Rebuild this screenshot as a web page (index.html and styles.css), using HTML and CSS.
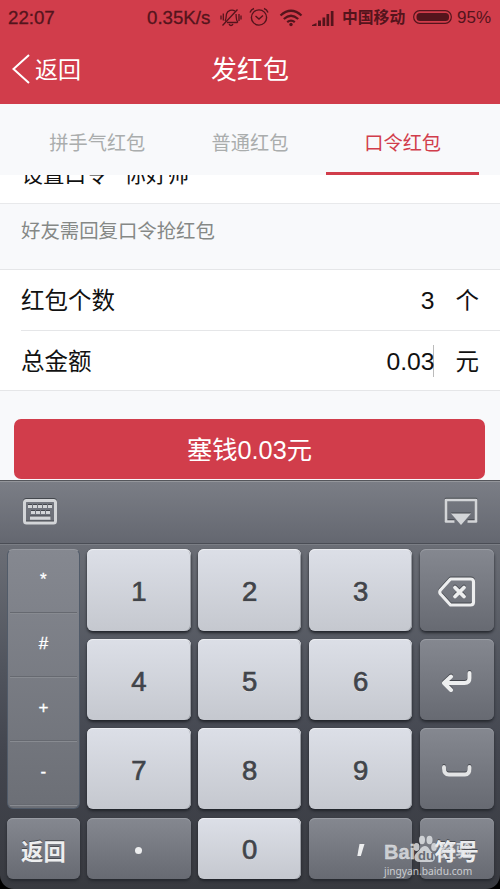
FILE: index.html
```html
<!DOCTYPE html>
<html lang="zh-CN">
<head>
<meta charset="utf-8">
<title>发红包</title>
<link rel="stylesheet" href="styles.css">
</head>
<body>
<div class="screen">
  <header class="top">
    <div class="status">
      <span class="clock">22:07</span>
      <span class="speed">0.35K/s</span>
      <svg class="i-mute" width="22" height="20" viewBox="0 0 22 20" fill="none" stroke="currentColor" stroke-width="1.3"><path d="M7 14.500h10.500M5 13c1.500-2 1-5 1.500-7C7.500 2.500 12 1 15 3M16 6c.5 3-.5 6 2 8.500M9 16c1 2 3 2 4 0M2.500 17.500L17.500 1.500M1 7.500v4M3.300 5.500v7M19 6v7M21 7.500v4"/></svg>
      <svg class="i-alarm" width="20" height="20" viewBox="0 0 20 20" fill="none" stroke="currentColor" stroke-width="1.4"><circle cx="10" cy="10.500" r="7.600"/><path d="M6.500 9l3.500 3 4-3.500M1 5.500q1-3 4-4M19 5.500q-1-3-4-4"/></svg>
      <svg class="i-wifi" width="24" height="18" viewBox="0 0 24 18" fill="none" stroke="currentColor" stroke-width="2.200"><path d="M1.500 6.500q10.500-9.500 21 0M4.800 10q7.200-6.500 14.400 0M8.200 13.200q3.800-3.200 7.600 0"/><circle cx="12" cy="15.500" r="1.700" fill="currentColor" stroke="none"/></svg>
      <svg class="i-signal" width="22" height="16" viewBox="0 0 22 16" fill="currentColor"><path d="M0 16v-1l4.500-2v3zM6 10.500h3V16H6zM10.500 7.500h2.700V16h-2.700zM14.500 4h2.700v12h-2.700zM18.800 1h2.700v15h-2.700z"/></svg>
      <span class="carrier">中国移动</span>
      <svg class="i-battery" width="39" height="14" viewBox="0 0 39 14"><rect x=".7" y=".7" width="37.600" height="12.600" rx="6" fill="none" stroke="currentColor" stroke-width="1.200"/><rect x="3.500" y="3" width="32.500" height="8" rx="3.500" fill="currentColor"/></svg>
      <span class="percent">95%</span>
    </div>
    <nav class="nav">
      <a class="back"><svg width="18" height="30" viewBox="0 0 18 30" fill="none" stroke="#fff" stroke-width="2"><path d="M17 1L1.500 15 17 29"/></svg><span>返回</span></a>
      <h1>发红包</h1>
    </nav>
  </header>
  <div class="tabs">
    <div class="tab">拼手气红包</div>
    <div class="tab">普通红包</div>
    <div class="tab active">口令红包</div>
  </div>
  <div class="command"><span>设置口令</span><span>你好帅</span></div>
  <div class="hint">好友需回复口令抢红包</div>
  <div class="form">
    <div class="row"><label>红包个数</label><span class="value">3</span><span class="unit">个</span></div>
    <div class="row"><label>总金额</label><span class="value caret">0.03</span><span class="unit">元</span></div>
  </div>
  <div class="submit">塞钱0.03元</div>
  <div class="keyboard-wrap">
    <div class="keyboard">
      <div class="toolbar">
        <svg class="emboss" width="34" height="28" viewBox="0 0 34 28"><rect x="1.500" y="2.500" width="31" height="22.500" rx="2" fill="none" stroke="#d3d5d8" stroke-width="3"/><path fill="#d3d5d8" d="M5 7h4v3H5zM10 7h4v3h-4zM15 7h4v3h-4zM20 7h4v3h-4zM25 7h4v3h-4zM8 13h4v3H8zM13 13h4v3h-4zM18 13h4v3h-4zM23 13h4v3h-4zM7 18.500h20.500v3.200H7z"/></svg>
        <svg class="emboss" width="34" height="28" viewBox="0 0 34 28"><path d="M10.500 23.500H2V2h30v21.500h-8.500" fill="none" stroke="#d3d5d8" stroke-width="2.700" stroke-linejoin="round"/><path d="M7 15.500h20L17 27z" fill="#d3d5d8"/></svg>
      </div>
      <div class="keys">
        <div class="symbols"><span>*</span><span>#</span><span>+</span><span>-</span></div>
        <div class="key">1</div><div class="key">2</div><div class="key">3</div>
        <div class="key dark"><svg class="emboss" width="38" height="30" viewBox="0 0 38 30" fill="none" stroke="#edeeef" stroke-width="3.200" stroke-linejoin="round" stroke-linecap="round"><path d="M12.500 2h20q3 0 3 3v20q0 3-3 3h-20L2.500 17q-1.500-2 0-4z"/><path d="M17 10.500l9 9M26 10.500l-9 9" stroke-width="3.800"/></svg></div>
        <div class="key">4</div><div class="key">5</div><div class="key">6</div>
        <div class="key dark"><svg class="emboss" width="32" height="24" viewBox="0 0 32 24" fill="none" stroke="#edeeef" stroke-width="4" stroke-linejoin="round" stroke-linecap="round"><path d="M28.500 3v5q0 5-5 5H3M10 6.500L3 13l7 7"/></svg></div>
        <div class="key">7</div><div class="key">8</div><div class="key">9</div>
        <div class="key dark"><svg class="emboss" width="32" height="14" viewBox="0 0 32 14" fill="none" stroke="#e3e4e5" stroke-width="3.900" stroke-linecap="round"><path d="M3 3v1.500Q3 10.500 8 10.500h16q4.500 0 4.500-6V3"/></svg></div>
        <div class="key dark word">返回</div>
        <div class="key dark"><i class="dot"></i></div>
        <div class="key">0</div>
        <div class="key dark"><svg width="9" height="14" viewBox="0 0 9 14"><path d="M3.500 1h5L4.800 13H1.300z" fill="#edeeef"/></svg></div>
        <div class="key dark word">符号</div>
      </div>
    </div>
    <div class="watermark">
      <div class="brand"><span>Bai</span><svg width="24" height="28" viewBox="0 0 24 28" fill="currentColor"><ellipse cx="3.500" cy="12" rx="3" ry="4"/><ellipse cx="9" cy="5" rx="3" ry="4.200"/><ellipse cx="16.500" cy="5" rx="3" ry="4.200"/><ellipse cx="21" cy="12" rx="2.800" ry="4"/><path d="M12 11c4 0 4 4 7.500 7 4.500 4 2 9-2 9H6.500c-5 0-7-5-3-9 3.500-3 4.500-7 8.500-7z"/><text x="5" y="24.500" class="du">du</text></svg><span class="cn">经验</span></div>
      <div class="url">jingyan.baidu.com</div>
    </div>
  </div>
</div>
</body>
</html>
```
FILE: styles.css
```css
* { box-sizing: border-box; }
body { margin: 0; background: #f8f9fb; font-family: "Liberation Sans", "Noto Sans CJK SC", sans-serif; color: #111; }
.screen { width: 500px; height: 889px; overflow: hidden; display: flex; flex-direction: column; }
.screen > * { flex-shrink: 0; }
svg { display: block; flex: none; }

.top { height: 104px; background: #d13d4b; color: #fff; }
.status { height: 36px; display: flex; align-items: center; padding-left: 8px; color: #54141c; white-space: nowrap; font-size: 18px; -webkit-text-stroke: .3px #54141c; }
.clock { width: 139px; font-size: 18.700px; }
.speed { width: 73px; font-size: 18.700px; }
.i-mute { margin-top: -1px; }
.i-alarm { margin-left: 7px; margin-top: -2px; }
.i-wifi { margin-left: 10px; margin-top: -1px; }
.i-signal { margin-left: 9px; margin-top: -1px; }
.carrier { margin-left: 8px; margin-top: -3px; width: 64px; font-size: 15.800px; font-weight: 700; -webkit-text-stroke: 0; }
.i-battery { margin-left: 7px; margin-top: -2px; }
.percent { margin-left: 5px; font-size: 17px; -webkit-text-stroke: 0; }
.nav { height: 68px; display: grid; grid-template-columns: 1fr auto 1fr; align-items: center; padding: 0 12px; }
.back { display: flex; align-items: center; gap: 5px; font-size: 23px; line-height: 34px; }
.back svg { margin-top: -2px; }
.nav h1 { margin: 0; font-size: 26px; font-weight: 400; line-height: 38px; }

.tabs { height: 71px; padding: 0 21px; display: grid; grid-template-columns: 1fr 1fr 1fr; background: #f8f9fb; font-size: 19.200px; line-height: 79px; text-align: center; color: #aaadad; }
.tab { height: 71px; white-space: nowrap; }
.active { color: #d13d4b; border-bottom: 3px solid #d13d4b; }
.command { height: 29px; padding-left: 21.500px; display: flex; align-items: flex-end; gap: 17px; background: #fff; border-bottom: 1px solid #e8e9eb; overflow: hidden; font-size: 21.500px; line-height: 56px; }
.command span { height: 56px; }
.hint { height: 65px; padding-left: 21px; font-size: 19.400px; line-height: 54px; color: #858886; }
.form { height: 122px; background: #fff; border: solid #e5e6e8; border-width: 1px 0; }
.row { height: 60px; margin-left: 21px; padding: 2px 21px 0 0; display: flex; align-items: center; font-size: 23.500px; line-height: 36px; }
.row + .row { height: 61px; border-top: 1px solid #e5e6e8; }
.value { margin-left: auto; font-size: 24.700px; }
.caret { height: 32px; margin-top: -3px; line-height: 34px; background: linear-gradient(#bbb, #bbb) right 1px top / 1px 32px no-repeat; }
.unit { margin-left: 21px; }
.submit { height: 60px; margin: 28px 15px 1px 14px; border-radius: 7px; background: #d13d4b; color: #fff; font-size: 25.300px; line-height: 62px; text-align: center; }

.keyboard-wrap { position: relative; height: 409px; background: #000; }
.keyboard { height: 409px; border-radius: 0 0 14px 14px; background: linear-gradient(#6b6e76 63px, #50545d 190px, #43464f 270px, #383a40); overflow: hidden; }
.toolbar { height: 64px; padding: 0 22px 1px 23px; display: flex; align-items: center; justify-content: space-between; background: linear-gradient(#7b7e86, #646770); border-top: 1px solid #54565b; border-bottom: 1px solid #4a4d55; box-shadow: inset 0 1px #94969b, 0 1px #7b7e85; }
.emboss { filter: drop-shadow(0 -1px 0 #44474d); }
.keys { padding: 5px 7px 0; display: grid; grid-template-columns: 72.800px 103.600px 103.600px 103.600px 74px; grid-template-rows: 82px 81px 81px 61px; column-gap: 7.250px; row-gap: 8.200px; }
.symbols { grid-row: span 3; display: grid; grid-template-rows: repeat(4, 64px); border: 1px solid #515b69; border-top-color: #9699a0; border-radius: 6px; background: linear-gradient(#858890, #6c6f76); color: #fff; font-size: 17px; text-align: center; line-height: 60px; -webkit-text-stroke: .3px #fff; }
.symbols span { margin: 0 2px; border-bottom: 1px solid #888b91; box-shadow: inset 0 -1px #666970; }
.key { display: flex; align-items: center; justify-content: center; padding-top: 4px; border-radius: 6px; background: linear-gradient(#dcdfe7, #c5c8cf); box-shadow: inset 0 1px #eceef2, inset -1px 0 #989ba2, 0 2px 3px #202329; color: #41444a; font-size: 27.500px; -webkit-text-stroke: .7px #41444a; text-shadow: 0 1px #f1f2f4; }
.dark { background: linear-gradient(#858890, #676a72); box-shadow: inset 0 1px #999ca3, 0 2px 3px #25282e; color: #edeeef; text-shadow: 0 -1px #484b50; }
.word { font-size: 22.300px; font-weight: 700; -webkit-text-stroke: 0; }
.dot { width: 7px; height: 7px; border-radius: 50%; background: #edeeef; }

.watermark { position: absolute; left: 384px; top: 354px; color: rgba(228, 230, 233, .8); }
.brand { height: 29px; display: flex; align-items: flex-end; font-size: 20px; font-weight: 700; line-height: 21px; }
.brand svg { margin-left: -2px; }
.brand span:first-child { -webkit-text-stroke: .3px; }
.cn { font-size: 16.500px; line-height: 23px; margin-left: 2px; }
.du { font: 700 13px "Liberation Sans", sans-serif; fill: #666a72; }
.url { margin-top: 1px; font: 10.200px/14px "Noto Sans", sans-serif; }
```
